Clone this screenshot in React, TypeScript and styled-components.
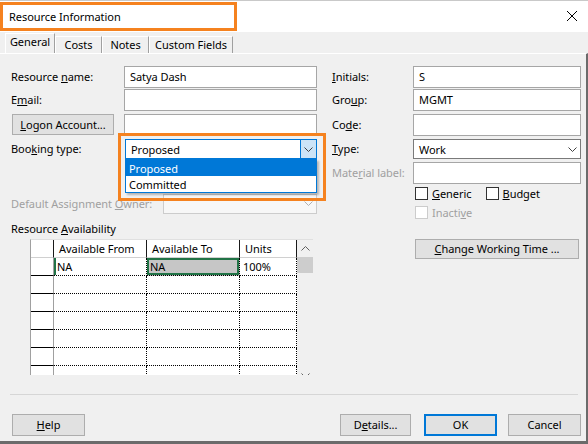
import React from "react";
import styled, { createGlobalStyle, css } from "styled-components";

const GlobalStyle = createGlobalStyle`
  html, body { margin: 0; padding: 0; background: #f0f0f0; }
  * { box-sizing: border-box; }
`;

const FONT = `"Segoe UI", "Noto Sans", "DejaVu Sans", sans-serif`;

const Window = styled.div`
  width: 588px;
  height: 444px;
  display: flex;
  flex-direction: column;
  background: #f0f0f0;
  font-family: ${FONT};
  font-size: 11px;
  letter-spacing: -0.05px;
  color: #000;
  overflow: hidden;
`;

const TitleBar = styled.div`
  height: 32px;
  flex: none;
  background: #fff;
  border-top: 1px solid #c9c9c9;
  display: flex;
  align-items: flex-start;
  justify-content: space-between;
`;

const TitleBox = styled.div`
  margin-top: 1px;
  width: 237px;
  height: 29px;
  border: 3px solid #f5821f;
  padding: 0 0 1px 6px;
  display: flex;
  align-items: center;
  font-size: 11px;
`;

const CloseBox = styled.div`
  margin: 10px 11px 0 0;
  width: 10px;
  height: 10px;
  display: flex;
`;

const TabStrip = styled.div`
  height: 21px;
  flex: none;
  display: flex;
  align-items: flex-end;
  padding-left: 5px;
`;

const Tab = styled.div<{ $active?: boolean; $w: number }>`
  width: ${(p) => p.$w}px;
  height: ${(p) => (p.$active ? 20 : 17)}px;
  padding-bottom: 2px;
  display: flex;
  align-items: center;
  justify-content: center;
  border-left: 1px solid #fff;
  border-right: 1px solid #a0a0a0;
  border-top: 1px solid #fff;
  ${(p) =>
    p.$active &&
    css`
      padding-bottom: 5px;
    `}
`;

const Body = styled.div`
  flex: 1;
  display: flex;
  flex-direction: column;
  border-top: 1px solid #fff;
  border-right: 2px solid #6b6b6b;
  border-bottom: 3px solid #6b6b6b;
`;

const Panel = styled.div`
  height: 340px;
  flex: none;
  display: grid;
  grid-template-columns: 306px 249px;
  column-gap: 15px;
  padding: 12px 0 0 11px;
`;

const Column = styled.div`
  display: flex;
  flex-direction: column;
`;

const Row = styled.div<{ $h: number; $mt?: number; $pl?: number }>`
  height: ${(p) => p.$h}px;
  margin-top: ${(p) => p.$mt ?? 0}px;
  padding-left: ${(p) => p.$pl ?? 0}px;
  display: flex;
  align-items: center;
  flex: none;
  position: relative;
`;

const Label = styled.div<{ $w: number; $disabled?: boolean }>`
  width: ${(p) => p.$w}px;
  flex: none;
  white-space: nowrap;
  margin-top: -2px;
  color: ${(p) => (p.$disabled ? "#a0a0a0" : "#000")};
`;

const TextBox = styled.div<{ $w: number; $disabled?: boolean }>`
  width: ${(p) => p.$w}px;
  height: 100%;
  flex: none;
  background: ${(p) => (p.$disabled ? "#f7f7f7" : "#fff")};
  border: 1px solid ${(p) => (p.$disabled ? "#cccccc" : "#a6a6a6")};
  padding: 0 0 1px 5px;
  display: flex;
  align-items: center;
  justify-content: space-between;
`;

const SelectBox = styled.div<{ $w: number; $focus?: boolean }>`
  width: ${(p) => p.$w}px;
  height: 100%;
  flex: none;
  background: #fff;
  border: 1px solid ${(p) => (p.$focus ? "#0078d7" : "#7a7a7a")};
  padding-left: 5px;
  display: flex;
  align-items: center;
  justify-content: space-between;
  position: relative;
`;

const ArrowZone = styled.div<{ $hot?: boolean }>`
  width: 16px;
  height: 100%;
  display: flex;
  align-items: center;
  justify-content: center;
  background: ${(p) => (p.$hot ? "#cce4f7" : "transparent")};
  border-left: 1px solid ${(p) => (p.$hot ? "#0078d7" : "transparent")};
`;

const DropList = styled.div`
  position: absolute;
  top: 19px;
  left: -1px;
  width: 192px;
  border: 1px solid #0078d7;
  background: #fff;
  box-shadow: 2px 2px 2px rgba(0, 0, 0, 0.25);
  z-index: 3;
`;

const DropItem = styled.div<{ $sel?: boolean }>`
  height: 16px;
  padding-left: 3px;
  display: flex;
  align-items: center;
  background: ${(p) => (p.$sel ? "#0078d7" : "#fff")};
  color: ${(p) => (p.$sel ? "#fff" : "#000")};
`;

const Highlight = styled.div`
  position: absolute;
  left: -8px;
  top: -7px;
  width: 208px;
  height: 68px;
  border: 3px solid #f5821f;
  pointer-events: none;
  z-index: 4;
`;

const Button = styled.div<{ $w: number; $default?: boolean }>`
  width: ${(p) => p.$w}px;
  height: 100%;
  flex: none;
  background: #e1e1e1;
  border: ${(p) => (p.$default ? "2px solid #0078d7" : "1px solid #adadad")};
  padding-bottom: 1px;
  display: flex;
  align-items: center;
  justify-content: center;
  white-space: nowrap;
`;

const SectionLabel = styled.div`
  margin-top: 8px;
  height: 14px;
  line-height: 14px;
`;

const Grid = styled.div`
  margin: 3px 0 0 19px;
  width: 283px;
  height: 136px;
  overflow: hidden;
  display: grid;
  grid-template-columns: 23px 93px 93px 57px 17px;
  grid-auto-rows: 18px;
  border-left: 1px solid #a0a0a0;
  border-top: 1px solid #e0e0e0;
  background: #fff;
`;

const HeadCell = styled.div`
  border-right: 1px solid #1a1a1a;
  border-bottom: 1px solid #d0d0d0;
  padding: 0 0 1px 5px;
  display: flex;
  align-items: center;
  white-space: nowrap;
`;

const RowHead = styled.div`
  border-right: 1px solid #a0a0a0;
  border-bottom: 1px solid #000;
`;

const Cell = styled.div<{ $sel?: boolean; $edge?: boolean }>`
  border-right: 1px dotted #000;
  border-bottom: 1px dotted #000;
  padding: 0 0 1px 3px;
  display: flex;
  align-items: center;
  background: ${(p) => (p.$sel ? "#c6c6c6" : "#fff")};
  ${(p) =>
    p.$sel &&
    css`
      box-shadow: inset 0 0 0 2px #217346;
    `}
  ${(p) =>
    p.$edge &&
    css`
      box-shadow: inset 2px 0 0 #217346;
    `}
`;

const ScrollBar = styled.div`
  grid-column: 5;
  grid-row: 1 / span 8;
  background: #f0f0f0;
  display: flex;
  flex-direction: column;
  align-items: center;
`;

const ScrollArrow = styled.div`
  height: 17px;
  width: 100%;
  display: flex;
  align-items: center;
  justify-content: center;
  flex: none;
`;

const Thumb = styled.div`
  width: 100%;
  height: 16px;
  background: #cdcdcd;
  flex: none;
`;

const Spacer = styled.div`
  flex: 1;
`;

const Check = styled.div<{ $disabled?: boolean }>`
  width: 13px;
  height: 13px;
  flex: none;
  border: 1px solid ${(p) => (p.$disabled ? "#cccccc" : "#333333")};
  background: #fff;
  margin-right: 4px;
`;

const CheckLabel = styled.div<{ $disabled?: boolean; $mr?: number }>`
  margin: -1px ${(p) => p.$mr ?? 0}px 0 0;
  color: ${(p) => (p.$disabled ? "#a0a0a0" : "#000")};
`;

const Separator = styled.div`
  margin: 0 8px 0 10px;
  height: 1px;
  background: #d6d6d6;
`;

const Footer = styled.div`
  margin-top: 19px;
  height: 22px;
  padding: 0 5px 0 12px;
  display: flex;
  align-items: center;
`;

const Gap = styled.div<{ $w: number }>`
  width: ${(p) => p.$w}px;
  flex: none;
`;

const Chevron = ({ color = "#333", dir = "down" }: { color?: string; dir?: "down" | "up" }) => (
  <svg width="9" height="5" viewBox="0 0 9 5">
    <polyline
      points={dir === "down" ? "0.5,0.5 4.5,4.5 8.5,0.5" : "0.5,4.5 4.5,0.5 8.5,4.5"}
      fill="none"
      stroke={color}
      strokeWidth="1"
    />
  </svg>
);

const rows = Array.from({ length: 7 }, (_, i) => i);

export default function App() {
  return (
    <Window>
      <GlobalStyle />
      <TitleBar>
        <TitleBox>Resource Information</TitleBox>
        <CloseBox>
          <svg width="10" height="10" viewBox="0 0 10 10">
            <path d="M0 0 L10 10 M10 0 L0 10" stroke="#000" strokeWidth="1" />
          </svg>
        </CloseBox>
      </TitleBar>
      <TabStrip>
        <Tab $active $w={50}>
          General
        </Tab>
        <Tab $w={47}>Costs</Tab>
        <Tab $w={47}>Notes</Tab>
        <Tab $w={84}>Custom Fields</Tab>
      </TabStrip>
      <Body>
        <Panel>
          <Column>
            <Row $h={22}>
              <Label $w={113}>
                Resource <u>n</u>ame:
              </Label>
              <TextBox $w={193}>Satya Dash</TextBox>
            </Row>
            <Row $h={22} $mt={1}>
              <Label $w={113}>
                E<u>m</u>ail:
              </Label>
              <TextBox $w={193} />
            </Row>
            <Row $h={21} $mt={3} $pl={1}>
              <Button $w={102}>
                <span>
                  <u>L</u>ogon Account...
                </span>
              </Button>
              <Gap $w={10} />
              <TextBox $w={193} />
            </Row>
            <Row $h={20} $mt={4}>
              <Label $w={114}>
                Boo<u>k</u>ing type:
              </Label>
              <SelectBox $w={192} $focus>
                <span>Proposed</span>
                <ArrowZone $hot>
                  <Chevron color="#404040" />
                </ArrowZone>
                <DropList>
                  <DropItem $sel>Proposed</DropItem>
                  <DropItem>Committed</DropItem>
                </DropList>
                <Highlight />
              </SelectBox>
            </Row>
            <Row $h={20} $mt={35}>
              <Label $w={152} $disabled>
                Default Assignment <u>O</u>wner:
              </Label>
              <TextBox $w={154} $disabled>
                <span />
                <ArrowZone>
                  <Chevron color="#b0b0b0" />
                </ArrowZone>
              </TextBox>
            </Row>
            <SectionLabel>
              Resource <u>A</u>vailability
            </SectionLabel>
            <Grid>
              <HeadCell />
              <HeadCell>Available From</HeadCell>
              <HeadCell>Available To</HeadCell>
              <HeadCell>Units</HeadCell>
              <ScrollBar>
                <ScrollArrow>
                  <Chevron color="#606060" dir="up" />
                </ScrollArrow>
                <Thumb />
                <Spacer />
                <ScrollArrow>
                  <Chevron color="#606060" />
                </ScrollArrow>
              </ScrollBar>
              {rows.map((i) => (
                <React.Fragment key={i}>
                  <RowHead />
                  <Cell $edge={i === 0}>{i === 0 ? "NA" : ""}</Cell>
                  <Cell $sel={i === 0}>{i === 0 ? "NA" : ""}</Cell>
                  <Cell>{i === 0 ? "100%" : ""}</Cell>
                </React.Fragment>
              ))}
            </Grid>
          </Column>
          <Column>
            <Row $h={22}>
              <Label $w={81}>
                <u>I</u>nitials:
              </Label>
              <TextBox $w={168}>S</TextBox>
            </Row>
            <Row $h={22} $mt={1}>
              <Label $w={81}>
                Gro<u>u</u>p:
              </Label>
              <TextBox $w={168}>MGMT</TextBox>
            </Row>
            <Row $h={22} $mt={3}>
              <Label $w={81}>
                Co<u>d</u>e:
              </Label>
              <TextBox $w={168} />
            </Row>
            <Row $h={20} $mt={3}>
              <Label $w={81}>
                <u>T</u>ype:
              </Label>
              <SelectBox $w={168}>
                <span>Work</span>
                <ArrowZone>
                  <Chevron color="#404040" />
                </ArrowZone>
              </SelectBox>
            </Row>
            <Row $h={22} $mt={3}>
              <Label $w={81} $disabled>
                Mate<u>r</u>ial label:
              </Label>
              <TextBox $w={168} />
            </Row>
            <Row $h={13} $mt={3} $pl={83}>
              <Check />
              <CheckLabel $mr={14}>
                <u>G</u>eneric
              </CheckLabel>
              <Check />
              <CheckLabel>
                <u>B</u>udget
              </CheckLabel>
            </Row>
            <Row $h={13} $mt={6} $pl={83}>
              <Check $disabled />
              <CheckLabel $disabled>
                Inacti<u>v</u>e
              </CheckLabel>
            </Row>
            <Row $h={20} $mt={20} $pl={83}>
              <Button $w={164}>
                <span>
                  <u>C</u>hange Working Time ...
                </span>
              </Button>
            </Row>
          </Column>
        </Panel>
        <Separator />
        <Footer>
          <Button $w={73}>
            <span>
              <u>H</u>elp
            </span>
          </Button>
          <Spacer />
          <Button $w={71}>
            <span>
              D<u>e</u>tails...
            </span>
          </Button>
          <Gap $w={13} />
          <Button $w={73} $default>
            OK
          </Button>
          <Gap $w={11} />
          <Button $w={73}>Cancel</Button>
        </Footer>
      </Body>
    </Window>
  );
}
